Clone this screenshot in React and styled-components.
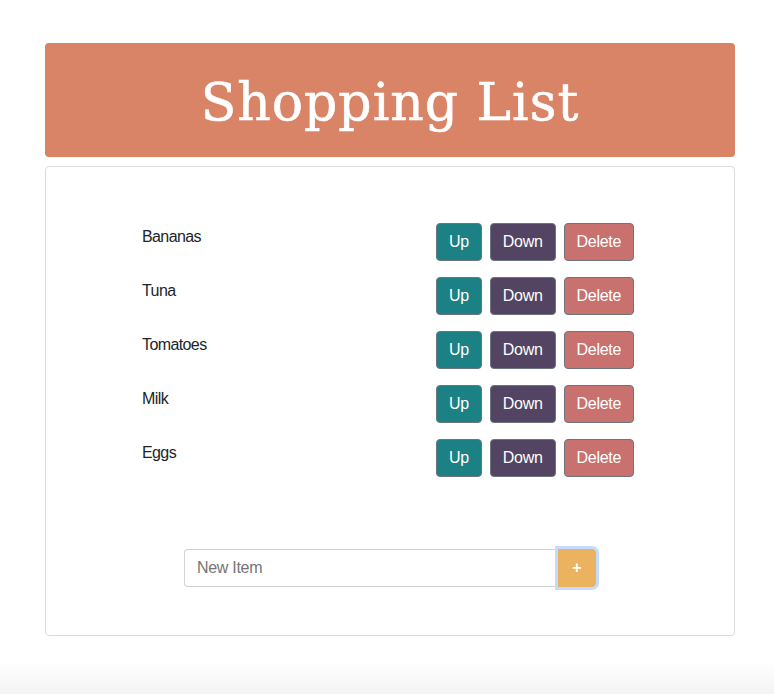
import React, { useState } from 'react';
import styled, { createGlobalStyle } from 'styled-components';

const GlobalStyle = createGlobalStyle`
  html, body {
    margin: 0;
    padding: 0;
  }
  body {
    min-height: 694px;
    background: linear-gradient(to bottom, #ffffff 0px, #ffffff 660px, #f4f4f4 694px);
    font-family: "Liberation Sans", Arial, sans-serif;
    font-size: 16px;
    line-height: 1.5;
    color: #212529;
  }
`;

const Page = styled.div`
  width: 690px;
  margin: 0 0 0 45px;
  padding-top: 43px;
`;

const Header = styled.header`
  height: 114px;
  background-color: #da8467;
  border-radius: 4px;
  display: flex;
  align-items: center;
  justify-content: center;
`;

const Title = styled.h1`
  margin: 0;
  padding-top: 4px;
  font-family: "DejaVu Serif", "Liberation Serif", serif;
  font-weight: normal;
  font-size: 52px;
  letter-spacing: 1px;
  color: #ffffff;
  -webkit-text-stroke: 0.6px #ffffff;
`;

const Card = styled.section`
  margin-top: 9px;
  border: 1px solid #dcdcdc;
  border-radius: 4px;
  padding: 56px 0 48px;
  display: flex;
  flex-direction: column;
`;

const List = styled.ul`
  list-style: none;
  margin: 0 100px 0 96px;
  padding: 0;
  display: flex;
  flex-direction: column;
  gap: 16px;
`;

const Row = styled.li`
  display: flex;
  align-items: flex-start;
  justify-content: space-between;
  height: 38px;
`;

const Name = styled.span`
  padding-top: 2px;
  font-size: 16px;
  line-height: 24px;
  letter-spacing: -0.6px;
  color: #212529;
`;

const Actions = styled.div`
  display: flex;
  gap: 8px;
`;

const colors = {
  up: '#1c8184',
  down: '#524462',
  delete: '#c9716e',
};

const ActionButton = styled.button`
  height: 38px;
  padding: 0 12px;
  font-family: "Liberation Sans", Arial, sans-serif;
  font-size: 16px;
  letter-spacing: -0.3px;
  color: #ffffff;
  background-color: ${props => colors[props.kind]};
  border: 1px solid #6c757d;
  border-radius: 4px;
  cursor: pointer;
`;

const AddForm = styled.form`
  margin: 72px auto 0;
  display: flex;
  width: 412px;
`;

const Input = styled.input`
  flex: 1;
  height: 38px;
  box-sizing: border-box;
  padding: 6px 12px;
  font-family: "Liberation Sans", Arial, sans-serif;
  font-size: 16px;
  letter-spacing: -0.3px;
  color: #495057;
  border: 1px solid #ced4da;
  border-right: none;
  border-radius: 4px 0 0 4px;
  outline: none;

  ::placeholder {
    color: #6c757d;
  }
`;

const AddButton = styled.button`
  width: 38px;
  height: 38px;
  box-sizing: border-box;
  font-family: "Liberation Sans", Arial, sans-serif;
  font-size: 16px;
  font-weight: bold;
  color: #ffffff;
  background-color: #ebb260;
  border: 1px solid #ebb260;
  border-radius: 0 4px 4px 0;
  box-shadow: 0 0 0 3px #c2dbfe;
  outline: none;
`;

export default function App() {
  const [items] = useState(['Bananas', 'Tuna', 'Tomatoes', 'Milk', 'Eggs']);

  return (
    <>
      <GlobalStyle />
      <Page>
        <Header>
          <Title>Shopping List</Title>
        </Header>
        <Card>
          <List>
            {items.map(item => (
              <Row key={item}>
                <Name>{item}</Name>
                <Actions>
                  <ActionButton kind="up">Up</ActionButton>
                  <ActionButton kind="down">Down</ActionButton>
                  <ActionButton kind="delete">Delete</ActionButton>
                </Actions>
              </Row>
            ))}
          </List>
          <AddForm onSubmit={e => e.preventDefault()}>
            <Input placeholder="New Item" />
            <AddButton type="submit">+</AddButton>
          </AddForm>
        </Card>
      </Page>
    </>
  );
}
